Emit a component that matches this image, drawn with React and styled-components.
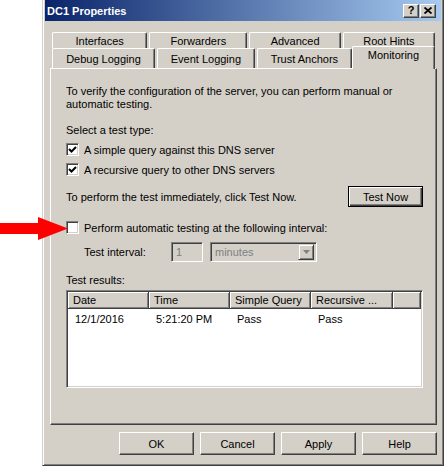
import React from "react";
import styled, { createGlobalStyle } from "styled-components";

const GlobalStyle = createGlobalStyle`
  html, body {
    margin: 0;
    padding: 0;
    background: #fff;
  }
  body {
    font-family: "Liberation Sans", Arial, sans-serif;
    font-size: 11px;
    color: #000;
  }
`;

const Page = styled.div`
  position: relative;
  width: 446px;
  height: 466px;
  overflow: hidden;
  display: flex;
`;

const Pointer = styled.svg`
  position: absolute;
  left: 0;
  top: 216px;
`;

const Dialog = styled.div`
  margin-left: 42px;
  width: 402px;
  height: 466px;
  box-sizing: border-box;
  background: #d4d0c8;
  border-left: 1px solid #d4d0c8;
  border-right: 1px solid #404040;
  border-bottom: 1px solid #404040;
  padding: 0 2px 2px 2px;
  box-shadow: inset 1px 0 #fff, inset -1px -1px #808080;
  display: flex;
  flex-direction: column;
`;

const TitleBar = styled.div`
  height: 21px;
  flex-shrink: 0;
  display: flex;
  align-items: center;
  padding: 0 5px 0 2px;
  background: linear-gradient(to right, #0a246a, #a6caf0);
  color: #fff;
  font-weight: bold;
  font-size: 11px;
`;

const TitleText = styled.span`
  flex: 1;
`;

const CaptionButton = styled.div`
  width: 16px;
  height: 14px;
  box-sizing: border-box;
  margin-left: ${(p) => p.$gap || 0}px;
  background: #d4d0c8;
  border: 1px solid;
  border-color: #fff #404040 #404040 #fff;
  box-shadow: inset -1px -1px #808080;
  color: #000;
  font-size: 11px;
  font-weight: bold;
  display: flex;
  align-items: center;
  justify-content: center;
  line-height: 1;
`;

const Body = styled.div`
  flex: 1;
  display: flex;
  flex-direction: column;
  padding: 11px 4px 0 5px;
`;

const TabStrip = styled.div`
  display: flex;
  flex-direction: column;
  padding-left: 2px;
  position: relative;
  z-index: 1;
`;

const TabRow = styled.div`
  display: flex;
  align-items: flex-end;
  height: ${(p) => p.$h}px;
`;

const Tab = styled.div`
  width: ${(p) => p.$w}px;
  height: ${(p) => (p.$active ? p.$h + 3 : p.$h)}px;
  margin-right: ${(p) => p.$mr ?? 2}px;
  margin-bottom: ${(p) => (p.$active ? -1 : 0)}px;
  box-sizing: border-box;
  background: #d4d0c8;
  border-top: 1px solid #fff;
  border-left: 1px solid #fff;
  border-right: 1px solid #404040;
  border-radius: 2px 2px 0 0;
  box-shadow: inset -1px 0 #808080;
  display: flex;
  justify-content: center;
  padding-top: ${(p) => (p.$active ? 2 : 2)}px;
  white-space: nowrap;
`;

const Panel = styled.div`
  height: 357px;
  box-sizing: border-box;
  border: 1px solid;
  border-color: #fff #404040 #404040 #fff;
  box-shadow: inset -1px -1px #808080;
  padding: 16px 13px 0 15px;
  display: flex;
  flex-direction: column;
`;

const Para = styled.div`
  line-height: 13px;
  margin-top: ${(p) => p.$mt || 0}px;
`;

const Row = styled.div`
  display: flex;
  align-items: center;
  height: ${(p) => p.$h || 13}px;
  margin-top: ${(p) => p.$mt || 0}px;
  padding-left: ${(p) => p.$indent || 0}px;
  white-space: nowrap;
`;

const Spacer = styled.div`
  flex: 1;
`;

const CheckBox = styled.div`
  width: 13px;
  height: 13px;
  box-sizing: border-box;
  background: #fff;
  border: 1px solid;
  border-color: #808080 #fff #fff #808080;
  box-shadow: inset 1px 1px #404040, inset -1px -1px #d4d0c8;
  margin-right: 5px;
  display: flex;
  align-items: center;
  justify-content: center;
`;

const PushButton = styled.button`
  width: 75px;
  height: ${(p) => p.$h || 23}px;
  box-sizing: border-box;
  padding: 0;
  background: #d4d0c8;
  font-family: inherit;
  font-size: 11px;
  color: #000;
  border: 1px solid;
  border-color: ${(p) => (p.$default ? "#000" : "#fff #404040 #404040 #fff")};
  box-shadow: ${(p) =>
    p.$default
      ? "inset 1px 1px #fff, inset -1px -1px #404040, inset -2px -2px #808080"
      : "inset -1px -1px #808080"};
`;

const Label = styled.span`
  width: ${(p) => p.$w}px;
  flex-shrink: 0;
`;

const Field = styled.div`
  width: ${(p) => p.$w}px;
  height: 20px;
  box-sizing: border-box;
  margin-right: ${(p) => p.$mr || 0}px;
  border: 1px solid;
  border-color: #808080 #fff #fff #808080;
  box-shadow: inset 1px 1px #404040, inset -1px -1px #d4d0c8;
  color: #808080;
  display: flex;
  align-items: center;
  padding: 2px 2px 2px 4px;
`;

const FieldText = styled.span`
  flex: 1;
`;

const DropButton = styled.div`
  width: 16px;
  height: 16px;
  box-sizing: border-box;
  background: #d4d0c8;
  border: 1px solid;
  border-color: #d4d0c8 #404040 #404040 #d4d0c8;
  box-shadow: inset 1px 1px #fff, inset -1px -1px #808080;
  display: flex;
  align-items: center;
  justify-content: center;
`;

const ListView = styled.div`
  height: 98px;
  margin-top: 3px;
  box-sizing: border-box;
  background: #fff;
  border: 1px solid;
  border-color: #808080 #fff #fff #808080;
  box-shadow: inset 1px 1px #404040, inset -1px -1px #d4d0c8;
  padding: 1px;
  display: flex;
  flex-direction: column;
`;

const HeaderRow = styled.div`
  display: flex;
  height: 17px;
`;

const HeaderCell = styled.div`
  width: ${(p) => p.$w}px;
  flex: ${(p) => (p.$w ? "none" : 1)};
  box-sizing: border-box;
  background: #d4d0c8;
  border-right: 1px solid #404040;
  border-bottom: 1px solid #404040;
  box-shadow: inset 1px 1px #fff, inset -1px -1px #808080;
  padding: 2px 0 0 5px;
  white-space: nowrap;
  overflow: hidden;
`;

const DataRow = styled.div`
  display: flex;
  padding-top: 4px;
`;

const DataCell = styled.div`
  width: ${(p) => p.$w}px;
  padding-left: 7px;
  box-sizing: border-box;
  white-space: nowrap;
`;

const ButtonRow = styled.div`
  display: flex;
  justify-content: flex-end;
  gap: 6px;
  margin-top: 7px;
`;

const cols = [81, 81, 81, 82];

const Check = () => (
  <svg width="9" height="9" viewBox="0 0 9 9">
    <polyline points="1,4 3.5,6.5 8,2" fill="none" stroke="#000" strokeWidth="2" />
  </svg>
);

export default function App() {
  return (
    <>
      <GlobalStyle />
      <Page>
        <Pointer width="70" height="26" viewBox="0 0 70 26">
          <polygon points="0,7 38,7 38,1 68,12.5 38,24 38,18 0,18" fill="#f00" />
        </Pointer>
        <Dialog>
          <TitleBar>
            <TitleText>DC1 Properties</TitleText>
            <CaptionButton>?</CaptionButton>
            <CaptionButton $gap={1}>
              <svg width="8" height="7" viewBox="0 0 8 7">
                <path d="M0.5 0.5 L7.5 6.5 M7.5 0.5 L0.5 6.5" stroke="#000" strokeWidth="1.8" />
              </svg>
            </CaptionButton>
          </TitleBar>
          <Body>
            <TabStrip>
              <TabRow $h={16}>
                <Tab $w={96} $h={16}>Interfaces</Tab>
                <Tab $w={99} $h={16}>Forwarders</Tab>
                <Tab $w={92} $h={16}>Advanced</Tab>
                <Tab $w={93} $h={16}>Root Hints</Tab>
              </TabRow>
              <TabRow $h={20}>
                <Tab $w={104} $h={20} style={{ paddingTop: 4 }}>Debug Logging</Tab>
                <Tab $w={99} $h={20} style={{ paddingTop: 4 }}>Event Logging</Tab>
                <Tab $w={96} $h={20} $mr={0} style={{ paddingTop: 4 }}>Trust Anchors</Tab>
                <Tab $w={84} $h={20} $active>Monitoring</Tab>
              </TabRow>
            </TabStrip>
            <Panel>
              <Para>
                To verify the configuration of the server, you can perform manual or
                <br />
                automatic testing.
              </Para>
              <Para $mt={13}>Select a test type:</Para>
              <Row $mt={6}>
                <CheckBox>
                  <Check />
                </CheckBox>
                A simple query against this DNS server
              </Row>
              <Row $mt={7}>
                <CheckBox>
                  <Check />
                </CheckBox>
                A recursive query to other DNS servers
              </Row>
              <Row $mt={10} $h={21}>
                To perform the test immediately, click Test Now.
                <Spacer />
                <PushButton $default $h={21}>Test Now</PushButton>
              </Row>
              <Row $mt={14}>
                <CheckBox />
                Perform automatic testing at the following interval:
              </Row>
              <Row $mt={8} $h={20} $indent={18}>
                <Label $w={87}>Test interval:</Label>
                <Field $w={32} $mr={7}>
                  <FieldText>1</FieldText>
                </Field>
                <Field $w={107}>
                  <FieldText>minutes</FieldText>
                  <DropButton>
                    <svg width="7" height="4" viewBox="0 0 7 4">
                      <polygon points="0,0 7,0 3.5,4" fill="#808080" />
                    </svg>
                  </DropButton>
                </Field>
              </Row>
              <Para $mt={12}>Test results:</Para>
              <ListView>
                <HeaderRow>
                  <HeaderCell $w={cols[0]}>Date</HeaderCell>
                  <HeaderCell $w={cols[1]}>Time</HeaderCell>
                  <HeaderCell $w={cols[2]}>Simple Query</HeaderCell>
                  <HeaderCell $w={cols[3]}>Recursive ...</HeaderCell>
                  <HeaderCell />
                </HeaderRow>
                <DataRow>
                  <DataCell $w={cols[0]}>12/1/2016</DataCell>
                  <DataCell $w={cols[1]}>5:21:20 PM</DataCell>
                  <DataCell $w={cols[2]}>Pass</DataCell>
                  <DataCell $w={cols[3]}>Pass</DataCell>
                </DataRow>
              </ListView>
            </Panel>
            <ButtonRow>
              <PushButton>OK</PushButton>
              <PushButton>Cancel</PushButton>
              <PushButton>Apply</PushButton>
              <PushButton>Help</PushButton>
            </ButtonRow>
          </Body>
        </Dialog>
      </Page>
    </>
  );
}
